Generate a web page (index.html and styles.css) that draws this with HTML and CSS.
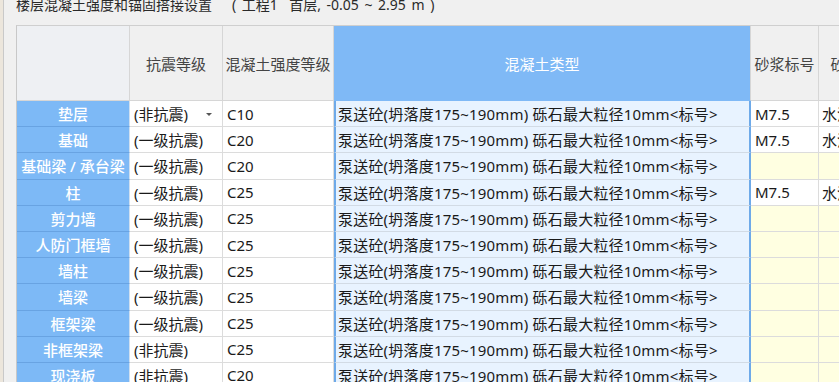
FILE: index.html
```html
<!DOCTYPE html>
<html lang="zh-CN">
<head>
<meta charset="utf-8">
<title>楼层混凝土强度和锚固搭接设置</title>
<link rel="stylesheet" href="styles.css">
</head>
<body>
<div class="page">
  <div class="edge"></div>
  <div class="main">
    <div class="title">楼层混凝土强度和锚固搭接设置<span class="sub">( 工程1  首层, -0.05 ~ 2.95 m )</span></div>
    <div class="grid">
      <div class="hd hd-corner"></div>
      <div class="hd">抗震等级</div>
      <div class="hd">混凝土强度等级</div>
      <div class="hd hd-sel">混凝土类型</div>
      <div class="hd">砂浆标号</div>
      <div class="hd hd-last">砂浆类型</div>

      <div class="lb">垫层</div>
      <div class="c c-drop"><span>(非抗震)</span><i class="arrow"></i></div>
      <div class="c">C10</div>
      <div class="c sel">泵送砼(坍落度175~190mm) 砾石最大粒径10mm&lt;标号&gt;</div>
      <div class="c">M7.5</div>
      <div class="c last">水泥砂浆</div>

      <div class="lb">基础</div>
      <div class="c">(一级抗震)</div>
      <div class="c">C20</div>
      <div class="c sel">泵送砼(坍落度175~190mm) 砾石最大粒径10mm&lt;标号&gt;</div>
      <div class="c">M7.5</div>
      <div class="c last">水泥砂浆</div>

      <div class="lb">基础梁 / 承台梁</div>
      <div class="c">(一级抗震)</div>
      <div class="c">C20</div>
      <div class="c sel">泵送砼(坍落度175~190mm) 砾石最大粒径10mm&lt;标号&gt;</div>
      <div class="c ro"></div>
      <div class="c ro last"></div>

      <div class="lb">柱</div>
      <div class="c">(一级抗震)</div>
      <div class="c">C25</div>
      <div class="c sel">泵送砼(坍落度175~190mm) 砾石最大粒径10mm&lt;标号&gt;</div>
      <div class="c">M7.5</div>
      <div class="c last">水泥砂浆</div>

      <div class="lb">剪力墙</div>
      <div class="c">(一级抗震)</div>
      <div class="c">C25</div>
      <div class="c sel">泵送砼(坍落度175~190mm) 砾石最大粒径10mm&lt;标号&gt;</div>
      <div class="c ro"></div>
      <div class="c ro last"></div>

      <div class="lb">人防门框墙</div>
      <div class="c">(一级抗震)</div>
      <div class="c">C25</div>
      <div class="c sel">泵送砼(坍落度175~190mm) 砾石最大粒径10mm&lt;标号&gt;</div>
      <div class="c ro"></div>
      <div class="c ro last"></div>

      <div class="lb">墙柱</div>
      <div class="c">(一级抗震)</div>
      <div class="c">C25</div>
      <div class="c sel">泵送砼(坍落度175~190mm) 砾石最大粒径10mm&lt;标号&gt;</div>
      <div class="c ro"></div>
      <div class="c ro last"></div>

      <div class="lb">墙梁</div>
      <div class="c">(一级抗震)</div>
      <div class="c">C25</div>
      <div class="c sel">泵送砼(坍落度175~190mm) 砾石最大粒径10mm&lt;标号&gt;</div>
      <div class="c ro"></div>
      <div class="c ro last"></div>

      <div class="lb">框架梁</div>
      <div class="c">(一级抗震)</div>
      <div class="c">C25</div>
      <div class="c sel">泵送砼(坍落度175~190mm) 砾石最大粒径10mm&lt;标号&gt;</div>
      <div class="c ro"></div>
      <div class="c ro last"></div>

      <div class="lb">非框架梁</div>
      <div class="c">(非抗震)</div>
      <div class="c">C25</div>
      <div class="c sel">泵送砼(坍落度175~190mm) 砾石最大粒径10mm&lt;标号&gt;</div>
      <div class="c ro"></div>
      <div class="c ro last"></div>

      <div class="lb">现浇板</div>
      <div class="c">(非抗震)</div>
      <div class="c">C20</div>
      <div class="c sel">泵送砼(坍落度175~190mm) 砾石最大粒径10mm&lt;标号&gt;</div>
      <div class="c ro"></div>
      <div class="c ro last"></div>
    </div>
  </div>
</div>
</body>
</html>
```

FILE: styles.css
```css
html, body {
  margin: 0;
  padding: 0;
  width: 839px;
  height: 382px;
  overflow: hidden;
  background: #f0f0f0;
  font-family: "Noto Sans", "Noto Sans CJK SC", sans-serif;
  color: #222;
}

.page {
  display: flex;
  height: 382px;
}

.edge {
  width: 3px;
  flex: none;
  background: #ece6dc;
  border-right: 1px solid #c9c9c9;
}

.main {
  flex: 1;
  padding-left: 12px;
  min-width: 0;
}

.title {
  height: 25px;
  font-size: 14px;
  line-height: 10px;
  color: #2a2a2a;
  white-space: pre;
}

.sub {
  margin-left: 20px;
  word-spacing: 2px;
}

.grid {
  display: grid;
  grid-template-columns: 113px 93px 111px 417px 68px 84px;
  grid-template-rows: 75px repeat(11, 26.2px);
  border-left: 1px solid #c8c8c8;
  border-top: 1px solid #cfcfcf;
  font-size: 15px;
}

.grid > div {
  box-sizing: border-box;
  overflow: hidden;
  white-space: nowrap;
}

.hd {
  background: #f0f0f0;
  border-right: 1px solid #d6d6d6;
  border-bottom: 1px solid #d6d6d6;
  display: flex;
  align-items: center;
  justify-content: center;
  color: #444;
}

.hd-corner {
  background: #eef0f3;
}

.hd-sel {
  background: #7fb9f6;
  color: #fff;
  border-right: 1px solid #d6d6d6;
  border-bottom-color: #7fb9f6;
}

.lb {
  background: #7db9f6;
  color: #fff;
  font-weight: 500;
  border-right: 1px solid #cfdff0;
  border-bottom: 1px solid #68a3e2;
  display: flex;
  align-items: center;
  justify-content: center;
}

.c {
  background: #fff;
  border-right: 1px solid #dcdcdc;
  border-bottom: 1px solid #dcdcdc;
  display: flex;
  align-items: center;
  padding-left: 4px;
  color: #1a1a1a;
}

.c-drop {
  justify-content: space-between;
  padding-right: 10px;
}

.arrow {
  width: 0;
  height: 0;
  border-left: 3px solid transparent;
  border-right: 3px solid transparent;
  border-top: 3px solid #555;
  margin-top: 1px;
}

.sel {
  background: #e8f3ff;
  border-left: 2px solid #6eaae9;
  border-right: 2px solid #6eaae9;
  border-bottom: 1px solid #d2dbe5;
  padding-left: 2px;
  letter-spacing: 0.2px;
}

.ro {
  background: #ffffe1;
}

.last {
  padding-left: 3px;
}
```
